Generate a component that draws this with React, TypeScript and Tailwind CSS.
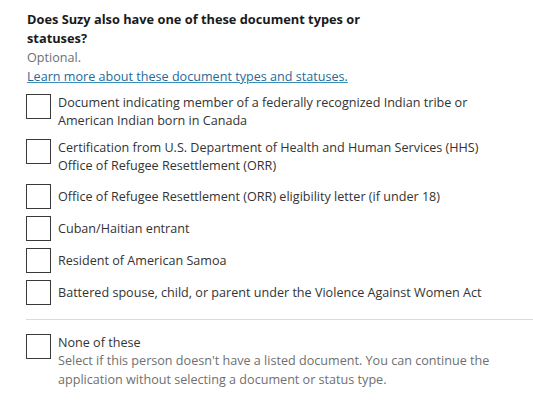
import React from "react";

const items: string[][] = [
  ["Document indicating member of a federally recognized Indian tribe or", "American Indian born in Canada"],
  ["Certification from U.S. Department of Health and Human Services (HHS)", "Office of Refugee Resettlement (ORR)"],
  ["Office of Refugee Resettlement (ORR) eligibility letter (if under 18)"],
  ["Cuban/Haitian entrant"],
  ["Resident of American Samoa"],
  ["Battered spouse, child, or parent under the Violence Against Women Act"],
];

function Box() {
  return <span className="block w-[25px] h-[25px] shrink-0 border-[1.5px] border-[#3a3a3a] bg-white" />;
}

export default function App() {
  return (
    <div
      className="w-[533px] h-[410px] bg-white overflow-hidden pl-[26px] pt-[10px] text-[#333333]"
      style={{ fontFamily: '"Open Sans", sans-serif' }}
    >
      <div className="w-[360px] pl-[1px] text-[12.8px] font-bold leading-[19px] text-[#1a1a1a]">
        Does Suzy also have one of these document types or statuses?
      </div>
      <div className="pl-[1px] text-[12.6px] leading-[20px] text-[#6f6f6f]">Optional.</div>
      <a
        href="#"
        className="block pl-[1px] text-[12.6px] leading-[18px] text-[#1f6a9a] underline decoration-[#3a8fb7] underline-offset-1"
      >
        Learn more about these document types and statuses.
      </a>
      <div className="mt-[8px] flex flex-col gap-[7px]">
        {items.map((lines, i) => (
          <label key={i} className={lines.length > 1 ? "flex items-start gap-[7px]" : "flex items-center gap-[7px]"}>
            <Box />
            <span className={lines.length > 1 ? "pb-[2px] text-[12.6px] leading-[18px] text-[#333333]" : "text-[12.6px] leading-[18px] text-[#333333]"}>
              {lines.map((l, j) => (
                <span key={j} className="block whitespace-nowrap">{l}</span>
              ))}
            </span>
          </label>
        ))}
      </div>
      <div className="mt-[14px] mb-[14px] h-px bg-[#dcdcdc]" />
      <label className="flex items-start gap-[7px]">
        <Box />
        <span className="text-[12.6px] leading-[18.4px]">
          <span className="block text-[#333333]">None of these</span>
          <span className="block w-[470px] text-[#6f6f6f]">
            Select if this person doesn't have a listed document. You can continue the application without selecting a document or status type.
          </span>
        </span>
      </label>
    </div>
  );
}
